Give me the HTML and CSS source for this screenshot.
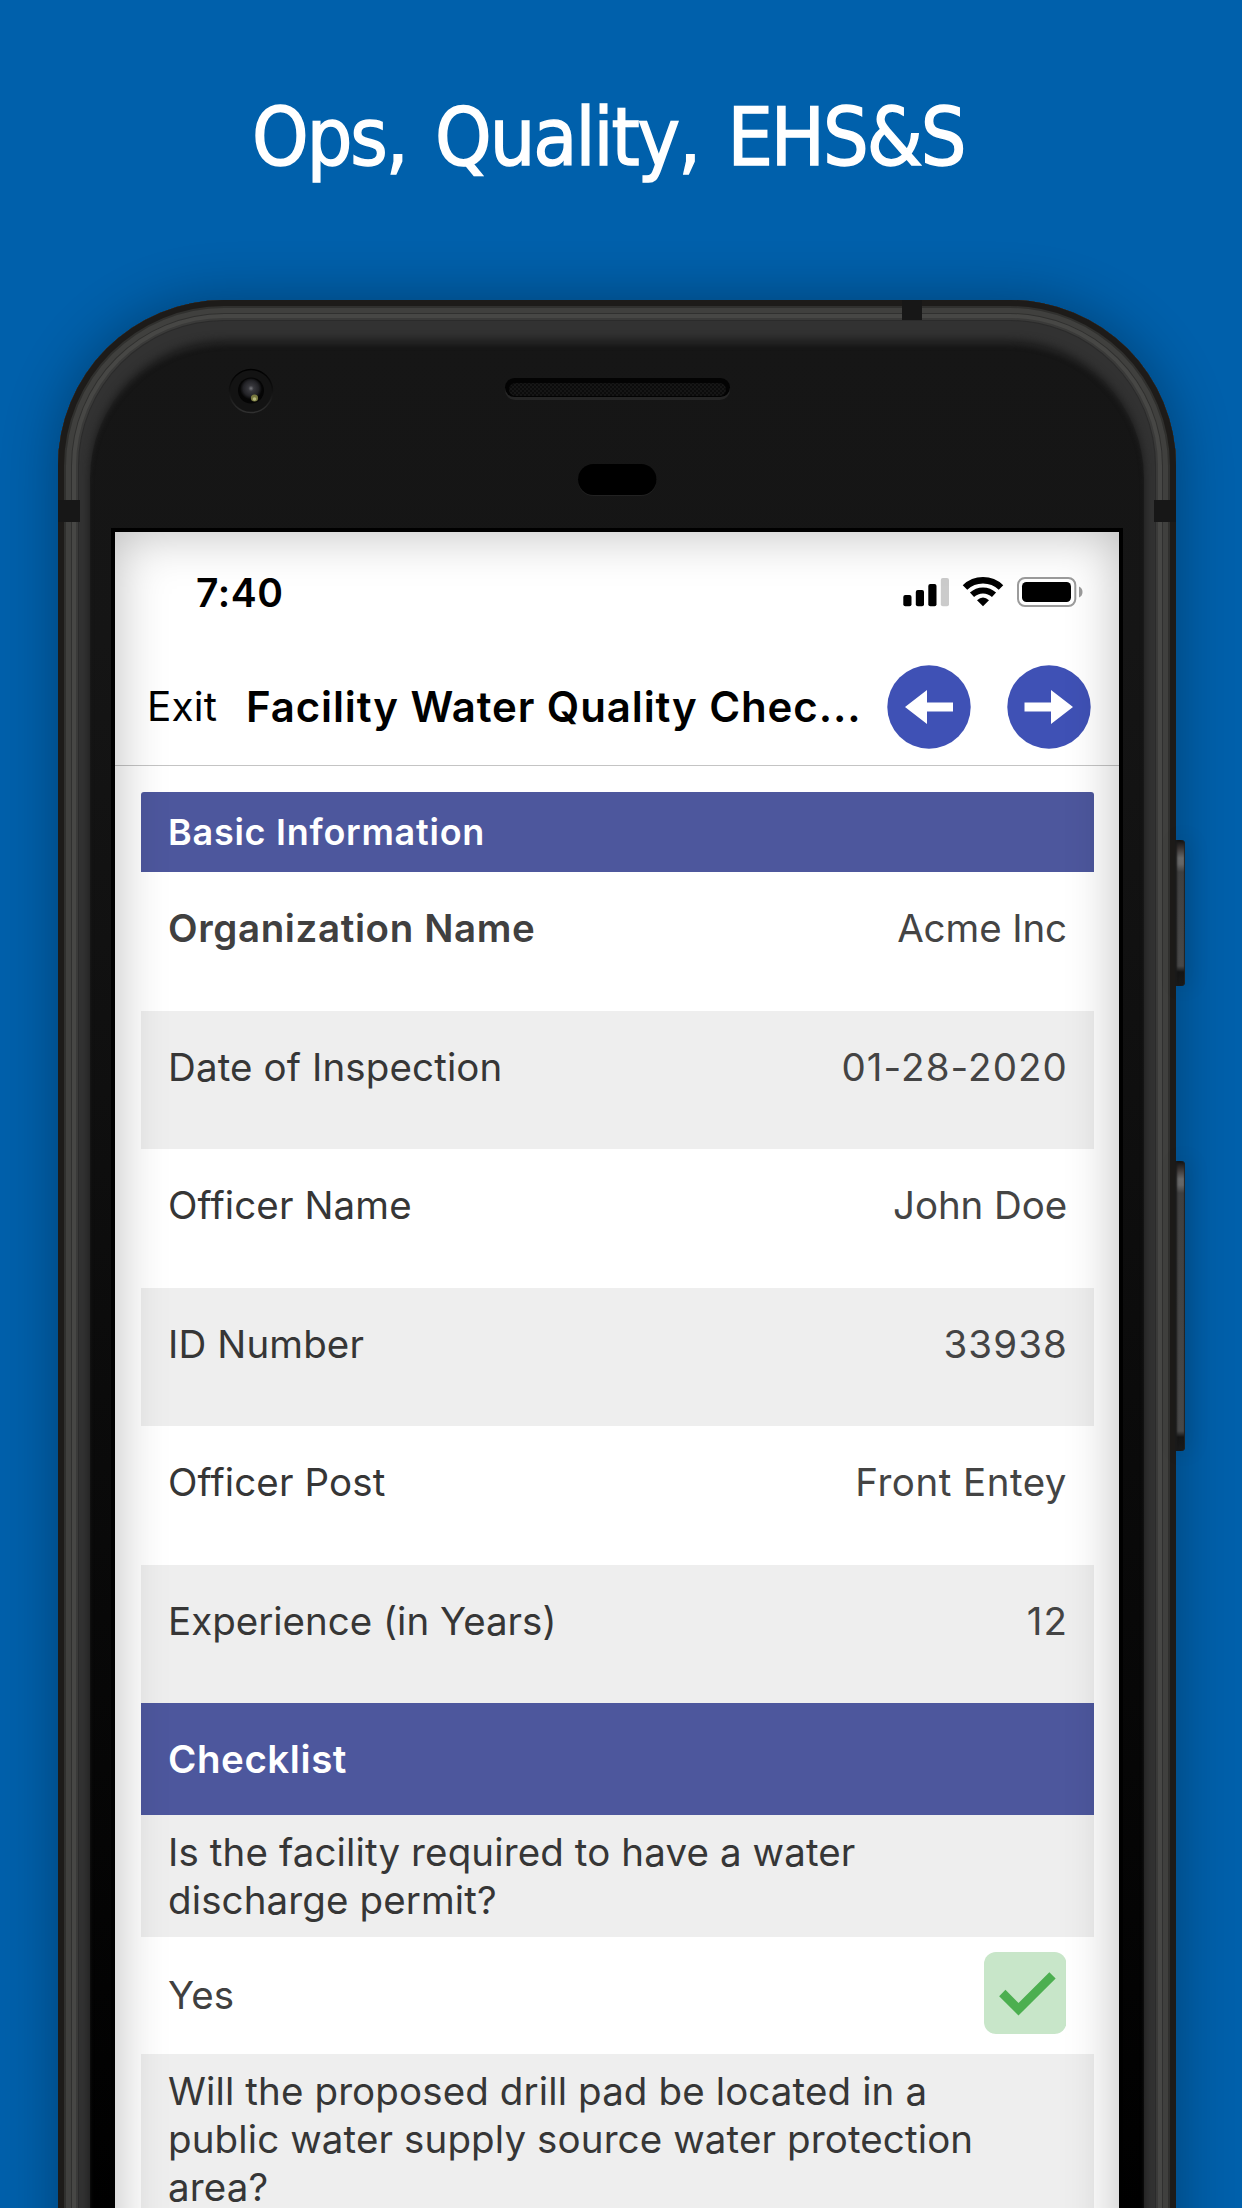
FILE: index.html
```
<!DOCTYPE html>
<html>
    <head>
        <meta charset="utf-8">
        <title>Ops, Quality, EHS&amp;S</title>
        <link rel="stylesheet" href="styles.css">
    </head>
    <body>
        <h1 class="headline">Ops, Quality, EHS&amp;S</h1>

        <div class="phone">
            <div class="button power"></div>
            <div class="button volume"></div>
            <div class="band band-top"></div>
            <div class="band band-left"></div>
            <div class="band band-right"></div>

            <div class="glass">
                <!-- camera, speaker and sensor -->
                <svg class="hardware" viewBox="90 342 1054 186">
                    <defs>
                        <radialGradient id="lens" cx="0.5" cy="0.45" r="0.5">
                            <stop offset="0" stop-color="#77777c"/>
                            <stop offset="0.25" stop-color="#38383d"/>
                            <stop offset="0.7" stop-color="#232327"/>
                            <stop offset="1" stop-color="#060606"/>
                        </radialGradient>
                        <linearGradient id="ring" x1="0" y1="0" x2="0" y2="1">
                            <stop offset="0" stop-color="#000"/>
                            <stop offset="0.5" stop-color="#111"/>
                            <stop offset="1" stop-color="#303030"/>
                        </linearGradient>
                        <pattern id="mesh" width="4" height="4" patternUnits="userSpaceOnUse">
                            <rect width="4" height="4" fill="#161616"/>
                            <rect width="2" height="2" fill="#0c0c0c"/>
                            <rect x="2" y="2" width="2" height="2" fill="#0c0c0c"/>
                        </pattern>
                    </defs>
                    <circle cx="251" cy="391" r="21.5" fill="#131313" stroke="url(#ring)" stroke-width="1.5"/>
                    <circle cx="251" cy="390.5" r="13" fill="#050505"/>
                    <circle cx="251" cy="389.5" r="11" fill="url(#lens)"/>
                    <circle cx="254.5" cy="398" r="3.6" fill="#77783f"/>
                    <circle cx="254.5" cy="399" r="1.8" fill="#b5b77c"/>
                    <rect x="505" y="380" width="225" height="20" rx="10" fill="#262626"/>
                    <rect x="505" y="378" width="225" height="19" rx="9.5" fill="#030303"/>
                    <rect x="509" y="383" width="217" height="13" rx="6.5" fill="url(#mesh)"/>
                    <rect x="578" y="465" width="78.500" height="31" rx="15.500" fill="#222"/>
                    <rect x="578" y="464" width="78.500" height="31" rx="15.500" fill="#000"/>
                </svg>

                <div class="screen">
                    <div class="status">
                        <span class="time">7:40</span>
                        <svg class="status-icons" viewBox="903 576 180 32">
                            <rect x="903.300" y="595" width="8.200" height="11.300" rx="2"/>
                            <rect x="915.800" y="590" width="8.200" height="16.300" rx="2"/>
                            <rect x="928.300" y="584" width="8.200" height="22.300" rx="2"/>
                            <rect x="940.800" y="578" width="8.200" height="28.300" rx="2" fill="#cbcbcb"/>
                            <g fill="none" stroke="#000">
                                <path d="M965 587.500a26 26 0 0 1 36 0" stroke-width="6.500"/>
                                <path d="M972 594.800a16 16 0 0 1 22 0" stroke-width="6"/>
                            </g>
                            <path d="M983 606.300l-6-6q6-5.400 12 0z"/>
                            <rect x="1018" y="578" width="57.300" height="28" rx="7" fill="none" stroke="#9c9c9c" stroke-width="2"/>
                            <rect x="1022" y="582" width="49" height="20" rx="4.500"/>
                            <path d="M1079 586.500q3.500 1.500 3.500 5.500t-3.500 5.500z" fill="#9c9c9c"/>
                        </svg>
                    </div>

                    <div class="nav">
                        <span class="exit">Exit</span>
                        <span class="title">Facility Water Quality Chec...</span>
                        <svg class="arrow" viewBox="0 0 84 84">
                            <circle cx="42" cy="42" r="41.700" fill="#3f51b5"/>
                            <path d="M18 42l22-17v12.500h26v9H40V59z" fill="#fff"/>
                        </svg>
                        <svg class="arrow" viewBox="0 0 84 84">
                            <circle cx="42" cy="42" r="41.700" fill="#3f51b5"/>
                            <path d="M66 42L44 25v12.500H17.500v9H44V59z" fill="#fff"/>
                        </svg>
                    </div>

                    <div class="form">
                        <div class="section">Basic Information</div>
                        <div class="row required"><span>Organization Name</span><span class="value">Acme Inc</span></div>
                        <div class="row grey"><span>Date of Inspection</span><span class="value digits">01-28-2020</span></div>
                        <div class="row"><span>Officer Name</span><span class="value">John Doe</span></div>
                        <div class="row grey"><span>ID Number</span><span class="value digits">33938</span></div>
                        <div class="row"><span>Officer Post</span><span class="value wide">Front Entey</span></div>
                        <div class="row grey"><span class="long">Experience (in Years)</span><span class="value digits">12</span></div>

                        <div class="section checklist">Checklist</div>
                        <div class="question">Is the facility required to have a water<br>discharge permit?</div>
                        <div class="answer">
                            <span>Yes</span>
                            <svg class="check" viewBox="0 0 82.500 82">
                                <rect width="82.500" height="82" rx="12" fill="#c8e6c9"/>
                                <path d="M18.300 41l16.200 16.200L68.500 23.300" fill="none" stroke="#4caf50" stroke-width="8.900"/>
                            </svg>
                        </div>
                        <div class="question">Will the proposed drill pad be located in a<br>public water supply source water protection<br>area?</div>
                    </div>
                </div>
            </div>
        </div>
    </body>
</html>
```
FILE: styles.css
```
body {
    margin: 0;
    height: 2208px;
    overflow: hidden;
    background-color: #0060ab;
    font-family: Inter, "Liberation Sans", sans-serif;
    color: #363636;
}

.headline {
    margin: 0;
    height: 212px;
    padding: 88px 0 0 252px;
    font: 400 80px/100px "DejaVu Sans Condensed", "DejaVu Sans", sans-serif;
    letter-spacing: -2px;
    word-spacing: 7.5px;
    -webkit-text-stroke: 1.4px #FFFFFF;
    color: #FFFFFF;
    white-space: nowrap;
}

/* ---- phone body ---- */
.phone {
    position: relative;
    box-sizing: border-box;
    width: 1118px;
    height: 1980px;
    margin-left: 58px;
    padding: 42px 32px 0;
    border-radius: 166px 166px 0 0;
    background-color: #323232;
    box-shadow:
        inset 0 0 0 6px #1d1b19,
        inset 0 0 0 8px #30302e,
        inset 0 0 0 13px #40403e,
        inset 0 0 0 14px #30302f,
        inset 0 0 0 18px #474745,
        inset 0 0 0 20px #3a3a39,
        inset 0 0 0 21px #2b2b2b,
        0 0 56px rgba(0,0,0,0.32);
}

.glass {
    border-radius: 136px 136px 0 0;
    background: linear-gradient(#161616, #151515 300px, #050505 1500px, #000000 1866px);
    box-shadow: inset 0 4px 5px -1px #242424, 0 -2px 8px 0 #1a1a1a;
}

.hardware {
    display: block;
    width: 1054px;
    height: 186px;
}

.button {
    position: absolute;
    left: 1117px;
    width: 10px;
    border-radius: 0 4px 4px 0;
    background: linear-gradient(#111111, #3a3432 8px, #686868 18px, #666666 24px, #404040 32px, #484848 calc(100% - 20px), #151515 calc(100% - 14px), #1a1a1a);
    box-shadow: inset 2px 0 2px #1a1a1a, inset -1px 0 1px #222222, 4px 0 20px rgba(0,0,0,0.15);
}

.power {
    top: 540px;
    height: 146px;
}

.volume {
    top: 861px;
    height: 290px;
}

.band {
    position: absolute;
    background-color: #171717;
}

.band-top {
    top: 0;
    left: 844px;
    width: 20px;
    height: 20px;
}

.band-left {
    top: 200px;
    left: 0;
    width: 22px;
    height: 22px;
}

.band-right {
    top: 200px;
    right: 0;
    width: 22px;
    height: 22px;
}

/* ---- app screen ---- */
.screen {
    position: relative;
    width: 1004px;
    height: 1740px;
    margin: 0 21px;
    border: 4px solid #000000;
    background-color: #FFFFFF;
}

/* soft shade on the edges, over the content */
.screen::after {
    content: "";
    position: absolute;
    top: 0;
    right: 0;
    bottom: 0;
    left: 0;
    box-shadow: inset 0 0 52px rgba(0,0,0,0.27);
}

.status {
    display: flex;
    align-items: center;
    justify-content: space-between;
    height: 120px;
    padding: 0 36px 0 81px;
    color: #000000;
}

.time {
    font-size: 39px;
    font-weight: 600;
    letter-spacing: 0.6px;
}

.status-icons {
    width: 180px;
    height: 32px;
}

.nav {
    display: flex;
    align-items: center;
    height: 110px;
    padding: 0 28px 3px 32px;
    border-bottom: 1px solid #c4c4c4;
    color: #000000;
    white-space: nowrap;
}

.exit {
    width: 99px;
    margin-bottom: 1px;
    font-size: 40.5px;
    letter-spacing: 0.2px;
}

.title {
    flex: 1;
    margin-bottom: 2px;
    font-size: 42px;
    font-weight: 600;
    letter-spacing: 0.88px;
}

.arrow {
    width: 84px;
    height: 84px;
}

.arrow + .arrow {
    margin-left: 36px;
}

.form {
    margin: 26px 25px 0 26px;
    font-size: 38.5px;
    line-height: 48px;
    letter-spacing: 0.12px;
}

.section {
    display: flex;
    align-items: center;
    box-sizing: border-box;
    height: 80px;
    padding: 0 0 1px 27px;
    border-radius: 3px 3px 0 0;
    background-color: #4d579d;
    color: #FFFFFF;
    font-size: 36px;
    font-weight: 600;
    letter-spacing: 0.74px;
}

.checklist {
    height: 112px;
    border-radius: 0;
    font-size: 38.5px;
    letter-spacing: 0.56px;
}

.row {
    display: flex;
    justify-content: space-between;
    box-sizing: border-box;
    height: 138.5px;
    padding: 32px 27px 0;
}

.grey, .question {
    background-color: #eeeeee;
}

.required {
    font-weight: 600;
    letter-spacing: 0.62px;
    color: #404040;
}

.long {
    letter-spacing: 0;
}

.value {
    font-weight: 400;
    letter-spacing: -0.1px;
    color: #444444;
}

.wide {
    letter-spacing: 0.5px;
}

.digits {
    margin-right: -1px;
    letter-spacing: 1.1px;
}

.question {
    padding: 13px 27px 12.5px;
}

.answer {
    display: flex;
    align-items: center;
    justify-content: space-between;
    height: 117.5px;
    padding: 0 28px 0 27px;
    color: #404040;
}

.check {
    width: 82.5px;
    height: 82px;
    margin-bottom: 4px;
}
```
